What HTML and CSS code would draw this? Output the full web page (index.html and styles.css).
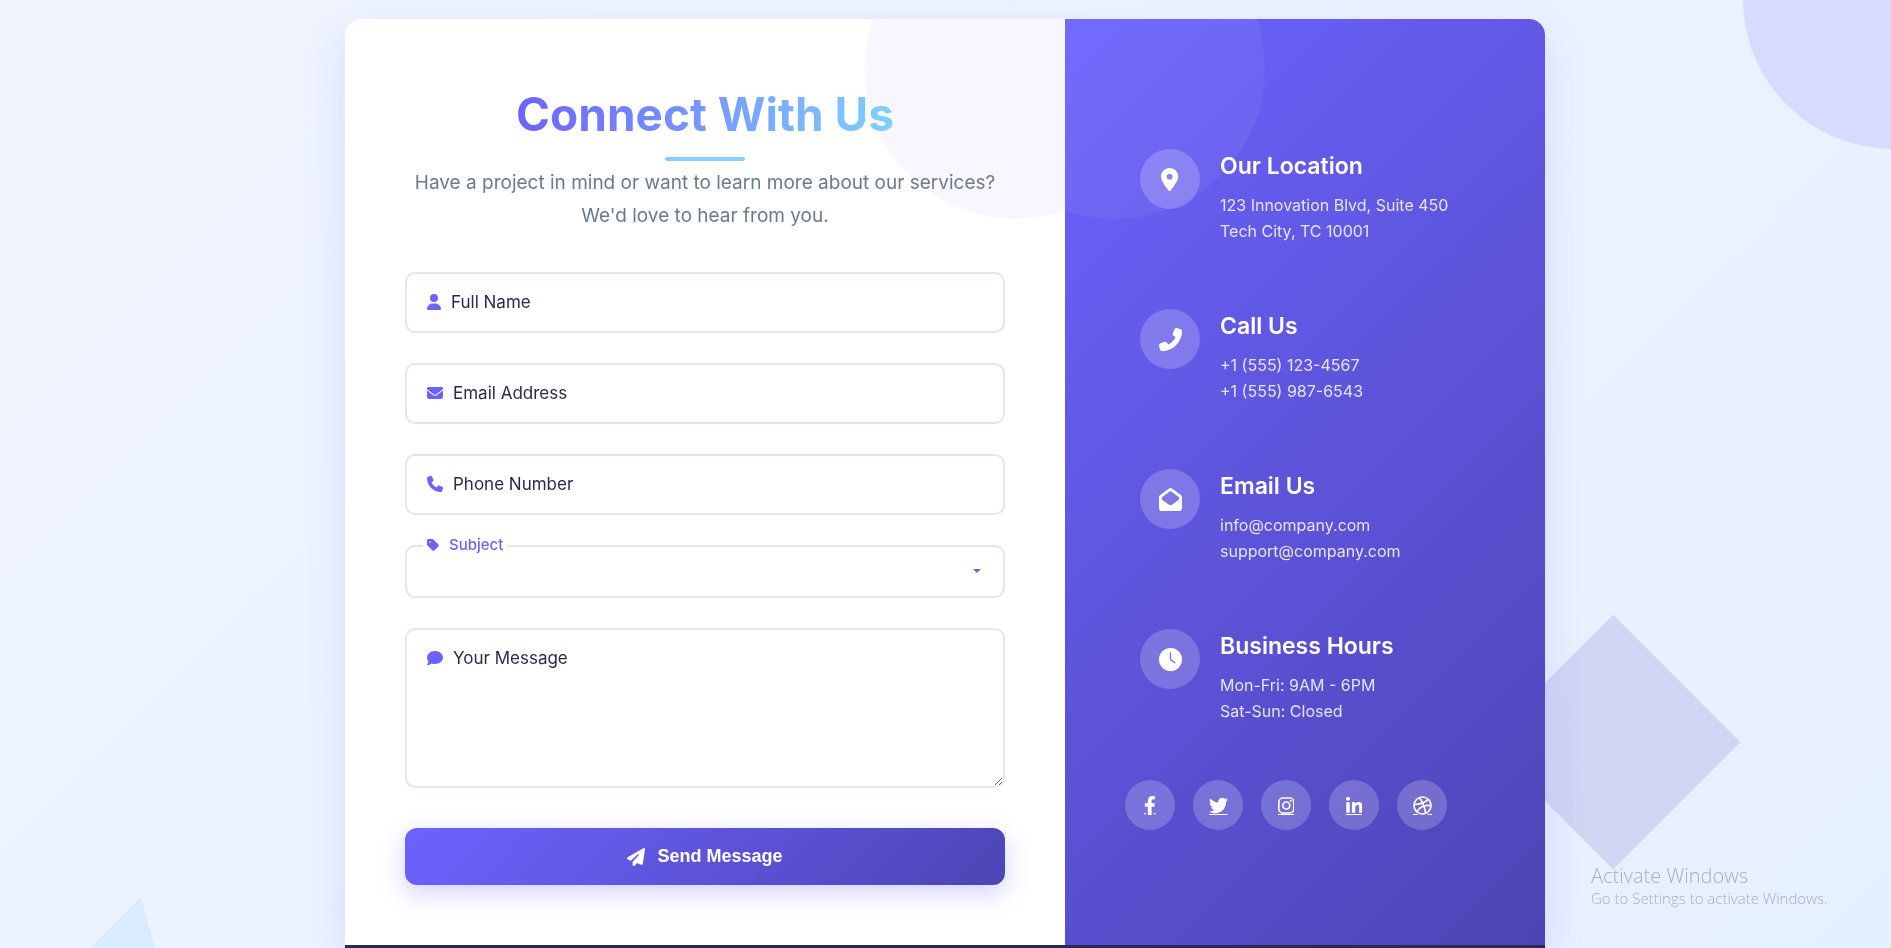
FILE: index.html
```html
<!DOCTYPE html>
<html lang="en">
<head>
<meta charset="utf-8">
<meta name="viewport" content="width=device-width, initial-scale=1">
<title>Connect With Us</title>
<link rel="stylesheet" href="styles.css">
</head>
<body>
<div class="shapes" aria-hidden="true">
  <span class="shape shape-circle"></span>
  <span class="shape shape-square"></span>
  <span class="shape shape-triangle"></span>
</div>

<main class="card">
  <section class="form-panel">
    <header class="intro">
      <h1 class="title">Connect With Us</h1>
      <p class="lead">Have a project in mind or want to learn more about our services? We'd love to hear from you.</p>
    </header>
    <form class="form">
      <div class="field">
        <input class="control" type="text" id="name">
        <label class="label" for="name"><svg class="icon icon-narrow" viewBox="0 0 448 512"><path d="M224 256A128 128 0 1 0 224 0a128 128 0 1 0 0 256zm-45.7 48C79.8 304 0 383.8 0 482.3C0 498.7 13.3 512 29.7 512H418.3c16.4 0 29.7-13.3 29.7-29.7C448 383.8 368.2 304 269.7 304H178.3z"/></svg>Full Name</label>
      </div>
      <div class="field">
        <input class="control" type="email" id="email">
        <label class="label" for="email"><svg class="icon" viewBox="0 0 512 512"><path d="M48 64C21.5 64 0 85.5 0 112c0 15.1 7.1 29.3 19.2 38.4L236.8 313.6c11.4 8.5 27 8.5 38.4 0L492.8 150.4c12.1-9.1 19.2-23.3 19.2-38.4c0-26.5-21.5-48-48-48H48zM0 176V384c0 35.3 28.7 64 64 64H448c35.3 0 64-28.7 64-64V176L294.4 339.2c-22.8 17.1-54 17.1-76.8 0L0 176z"/></svg>Email Address</label>
      </div>
      <div class="field">
        <input class="control" type="tel" id="phone">
        <label class="label" for="phone"><svg class="icon" viewBox="0 0 512 512"><path d="M164.9 24.6c-7.7-18.6-28-28.5-47.4-23.2l-88 24C12.1 30.2 0 46 0 64C0 311.4 200.6 512 448 512c18 0 33.8-12.1 38.6-29.5l24-88c5.3-19.4-4.6-39.7-23.2-47.4l-96-40c-16.3-6.8-35.2-2.1-46.3 11.6L304.7 368C234.3 334.7 177.3 277.7 144 207.3L193.3 167c13.7-11.2 18.4-30 11.6-46.3l-40-96z"/></svg>Phone Number</label>
      </div>
      <div class="field">
        <select class="control select" id="subject"><option value=""></option></select>
        <label class="label label-raised" for="subject"><svg class="icon icon-tag" viewBox="0 0 448 512"><path d="M0 80V229.5c0 17 6.7 33.3 18.7 45.3l176 176c25 25 65.5 25 90.5 0L418.7 317.3c25-25 25-65.5 0-90.5l-176-176c-12-12-28.3-18.7-45.3-18.7H48C21.5 32 0 53.5 0 80zm112 32a32 32 0 1 1 0 64 32 32 0 1 1 0-64z"/></svg>Subject</label>
        <svg class="caret" viewBox="0 0 8 4"><path d="M0 0h8L4 4z"/></svg>
      </div>
      <div class="field">
        <textarea class="control message" id="message"></textarea>
        <label class="label" for="message"><svg class="icon" viewBox="0 0 512 512"><path d="M512 240c0 114.9-114.6 208-256 208c-37.1 0-72.3-6.4-104.1-17.9c-11.9 8.7-31.3 20.6-54.3 30.6C73.6 471.1 44.7 480 16 480c-6.5 0-12.3-3.9-14.8-9.9c-2.5-6-1.1-12.8 3.4-17.4l.3-.3c.3-.3 .7-.7 1.3-1.4c1.1-1.2 2.8-3.1 4.9-5.7c4.1-5 9.6-12.4 15.2-21.6c10-16.6 19.5-38.4 21.4-62.9C17.7 326.8 0 285.1 0 240C0 125.1 114.6 32 256 32s256 93.1 256 208z"/></svg>Your Message</label>
      </div>
      <button class="submit" type="submit"><svg class="submit-icon" viewBox="0 0 512 512"><path d="M498.1 5.6c10.1 7 15.4 19.1 13.5 31.2l-64 416c-1.5 9.7-7.4 18.2-16 23s-18.9 5.4-28 1.6L284 427.7l-68.5 74.1c-8.9 9.7-22.9 12.9-35.2 8.1S160 493.2 160 480V396.4c0-4 1.5-7.8 4.2-10.7L331.8 202.8c5.8-6.3 5.6-16-.4-22s-15.7-6.4-22-.7L106 360.8 17.7 316.6C7.1 311.3 .3 300.7 0 288.9s5.9-22.8 16.1-28.7l448-256c10.7-6.1 23.9-5.5 34 1.4z"/></svg>Send Message</button>
    </form>
  </section>

  <section class="info-panel">
    <ul class="info-list">
      <li class="info">
        <span class="badge"><svg class="badge-icon" viewBox="0 0 384 512"><path d="M215.7 499.2C267 435 384 279.4 384 192C384 86 298 0 192 0S0 86 0 192c0 87.4 117 243 168.3 307.2c12.3 15.3 35.1 15.3 47.4 0zM192 128a64 64 0 1 1 0 128 64 64 0 1 1 0-128z"/></svg></span>
        <div><h2 class="info-title">Our Location</h2><p class="info-text">123 Innovation Blvd, Suite 450<br>Tech City, TC 10001</p></div>
      </li>
      <li class="info">
        <span class="badge"><svg class="badge-icon" viewBox="0 0 512 512"><path transform="matrix(-1 0 0 1 512 0)" d="M164.9 24.6c-7.7-18.6-28-28.5-47.4-23.2l-88 24C12.1 30.2 0 46 0 64C0 311.4 200.6 512 448 512c18 0 33.8-12.1 38.6-29.5l24-88c5.3-19.4-4.6-39.7-23.2-47.4l-96-40c-16.3-6.8-35.2-2.1-46.3 11.6L304.7 368C234.3 334.7 177.3 277.7 144 207.3L193.3 167c13.7-11.2 18.4-30 11.6-46.3l-40-96z"/></svg></span>
        <div><h2 class="info-title">Call Us</h2><p class="info-text">+1 (555) 123-4567<br>+1 (555) 987-6543</p></div>
      </li>
      <li class="info">
        <span class="badge"><svg class="badge-icon" viewBox="0 0 512 512"><path d="M64 208.1L256 65.9 448 208.1v47.4L289.5 373c-9.7 7.2-21.4 11-33.5 11s-23.8-3.9-33.5-11L64 255.5V208.1zM256 0c-12.1 0-23.8 3.9-33.5 11L25.9 156.7C9.6 168.8 0 187.8 0 208.1V448c0 35.3 28.7 64 64 64H448c35.3 0 64-28.7 64-64V208.1c0-20.3-9.6-39.4-25.9-51.4L289.5 11C279.8 3.9 268.1 0 256 0z"/></svg></span>
        <div><h2 class="info-title">Email Us</h2><p class="info-text">info@company.com<br>support@company.com</p></div>
      </li>
      <li class="info">
        <span class="badge"><svg class="badge-icon" viewBox="0 0 512 512"><path fill-rule="evenodd" d="M256 0a256 256 0 1 1 0 512A256 256 0 1 1 256 0zM240 112V260c0 6 3 11 8 14l98 68c8 5 17 3 22-4s3-17-4-22L272 252V112c0-9-7-16-16-16s-16 7-16 16z"/></svg></span>
        <div><h2 class="info-title">Business Hours</h2><p class="info-text">Mon-Fri: 9AM - 6PM<br>Sat-Sun: Closed</p></div>
      </li>
    </ul>
    <nav class="social" aria-label="Social media">
      <a class="social-link" href="#" aria-label="Facebook"><svg class="social-icon" viewBox="0 0 320 512"><path d="M279.14 288l14.22-92.66h-88.91v-60.13c0-25.35 12.42-50.06 52.24-50.06h40.42V6.26S260.43 0 225.36 0c-73.22 0-121.08 44.38-121.08 124.72v70.62H22.89V288h81.39v224h100.17V288z"/><path d="M0 468h60v27H0zM250 468h70v27h-70z"/></svg></a>
      <a class="social-link" href="#" aria-label="Twitter"><svg class="social-icon" viewBox="0 0 512 512"><path d="M459.37 151.716c.325 4.548.325 9.097.325 13.645 0 138.72-105.583 298.558-298.558 298.558-59.452 0-114.68-17.219-161.137-47.106 8.447.974 16.568 1.299 25.34 1.299 49.055 0 94.213-16.568 130.274-44.832-46.132-.975-84.792-31.188-98.112-72.772 6.498.974 12.995 1.624 19.818 1.624 9.421 0 18.843-1.3 27.614-3.573-48.081-9.747-84.143-51.98-84.143-102.985v-1.299c13.969 7.797 30.214 12.67 47.431 13.319-28.264-18.843-46.781-51.005-46.781-87.391 0-19.492 5.197-37.36 14.294-52.954 51.655 63.675 129.3 105.258 216.365 109.807-1.624-7.797-2.599-15.918-2.599-24.04 0-57.828 46.782-104.934 104.934-104.934 30.213 0 57.502 12.67 76.67 33.137 23.715-4.548 46.456-13.32 66.599-25.34-7.798 24.366-24.366 44.833-46.132 57.827 21.117-2.273 41.584-8.122 60.426-16.243-14.292 20.791-32.161 39.308-52.628 54.253z"/><path d="M0 485h512v27H0z"/></svg></a>
      <a class="social-link" href="#" aria-label="Instagram"><svg class="social-icon" viewBox="0 -32 448 512"><rect x="22" y="22" width="404" height="404" rx="112" fill="none" stroke="#fff" stroke-width="44"/><circle cx="224" cy="224" r="94" fill="none" stroke="#fff" stroke-width="46"/><circle cx="343" cy="105" r="27"/><path d="M0 453h448v27H0z"/></svg></a>
      <a class="social-link" href="#" aria-label="LinkedIn"><svg class="social-icon" viewBox="0 -32 448 512"><path d="M100.28 416H7.4V138.9h92.88zM53.79 98.1C24.09 98.1 0 73.5 0 43.8a53.79 53.79 0 0 1 107.58 0c0 29.7-24.1 54.3-53.79 54.3zM447.9 416h-92.68V292.4c0-34.7-.7-79.2-48.29-79.2-48.29 0-55.69 37.7-55.69 76.7V416h-92.78V138.9h89.08v40.8h1.3c12.4-23.5 42.69-48.3 87.88-48.3 94 0 111.28 61.9 111.28 142.3V416z"/><path d="M0 453h448v27H0z"/></svg></a>
      <a class="social-link" href="#" aria-label="Dribbble"><svg class="social-icon" viewBox="0 0 512 512"><g fill="none" stroke="#fff" stroke-width="44"><circle cx="256" cy="256" r="230"/><path d="M28 228C160 230 300 205 410 92M104 424C180 300 300 230 484 262M170 42C260 150 310 280 340 470"/></g><path d="M0 485h120v27H0zM392 485h120v27H392z"/></svg></a>
    </nav>
  </section>
</main>
<footer class="footer"></footer>

<aside class="watermark">
  <p class="watermark-title">Activate Windows</p>
  <p class="watermark-text">Go to Settings to activate Windows.</p>
</aside>
</body>
</html>
```
FILE: styles.css
```css
:root {
  --primary: #6c63ff;
  --primary-dark: #4d44b5;
  --accent: #87cefa;
  --dark: #2a2950;
  --muted: #6b7a90;
  --line: #e2e6ee;
}

* { box-sizing: border-box; }

h1, h2, p, ul { margin: 0; padding: 0; }

body {
  margin: 0;
  min-height: 100vh;
  padding: 19px 21px 0 20px;
  display: flex;
  flex-direction: column;
  align-items: center;
  overflow: hidden;
  font-family: Inter, "Open Sans", sans-serif;
  color: var(--dark);
  background: linear-gradient(135deg, #f0f4ff 0%, #e5f0ff 100%);
}

svg { fill: currentColor; }

/* Decorative background */
.shapes { position: fixed; inset: 0; z-index: -1; overflow: hidden; }
.shape { position: absolute; }
.shape-circle {
  top: -151px;
  right: -152px;
  width: 300px;
  height: 300px;
  border-radius: 50%;
  background: rgba(108, 99, 255, 0.15);
}
.shape-square {
  right: 188px;
  bottom: 116px;
  width: 180px;
  height: 180px;
  transform: rotate(45deg);
  background: rgba(77, 68, 181, 0.15);
}
.shape-triangle {
  left: 0;
  bottom: -149px;
  width: 200px;
  height: 200px;
  clip-path: polygon(141px 0, 0 141px, 193px 193px);
  background: rgba(135, 206, 250, 0.18);
}

/* Card */
.card {
  width: 100%;
  max-width: 1200px;
  display: grid;
  grid-template-columns: 3fr 2fr;
  overflow: hidden;
  border-radius: 16px 16px 0 0;
  background: #fff;
  box-shadow: 0 16px 40px rgba(108, 99, 255, 0.16);
}

.form-panel, .info-panel { position: relative; overflow: hidden; padding: 60px; }
.form-panel::before, .info-panel::before {
  content: "";
  position: absolute;
  top: -100px;
  width: 300px;
  height: 300px;
  border-radius: 50%;
}
.form-panel::before { right: -100px; background: rgba(108, 99, 255, 0.05); }
.info-panel::before { left: -100px; background: rgba(255, 255, 255, 0.05); }

/* Intro */
.intro { position: relative; margin-bottom: 40px; text-align: center; }
.title {
  width: fit-content;
  margin: 0 auto;
  font-size: 46px;
  line-height: 70px;
  font-weight: 700;
  color: transparent;
  background: linear-gradient(90deg, var(--primary), #7fd0ff);
  background-clip: text;
}
.lead { font-size: 19px; line-height: 33px; color: var(--muted); }
.lead::before {
  content: "";
  display: block;
  width: 80px;
  height: 4px;
  margin: 8px auto 5px;
  border-radius: 2px;
  background: var(--accent);
}

/* Form */
.form { position: relative; display: flex; flex-direction: column; gap: 30px; }
.field { position: relative; display: flex; }
.control {
  width: 100%;
  height: 61px;
  padding: 16px 20px;
  border: 2px solid var(--line);
  border-radius: 10px;
  outline: none;
  background: #fff;
  font: inherit;
  font-size: 17px;
  color: var(--dark);
}
.select { height: 53px; appearance: none; }
.message { height: 160px; resize: vertical; }
.label {
  position: absolute;
  top: 18px;
  left: 22px;
  display: flex;
  align-items: center;
  gap: 10px;
  font-size: 17px;
  line-height: 24px;
}
.label-raised {
  top: -12px;
  left: 18px;
  padding: 0 4px;
  font-size: 15px;
  font-weight: 500;
  color: var(--primary);
  background: #fff;
}
.icon { width: 16px; height: 16px; color: var(--primary); }
.icon-narrow { width: 14px; }
.icon-tag { width: 12px; height: 14px; }
.caret {
  position: absolute;
  top: 24px;
  right: 24px;
  width: 8px;
  height: 4px;
  color: var(--primary);
  pointer-events: none;
}
.submit {
  display: flex;
  align-items: center;
  justify-content: center;
  gap: 12px;
  height: 57px;
  margin-top: 10px;
  border: 0;
  border-radius: 12px;
  font-family: "Liberation Sans", Arial, sans-serif;
  font-size: 18px;
  font-weight: 700;
  color: #fff;
  background: linear-gradient(135deg, var(--primary), var(--primary-dark));
  box-shadow: 0 8px 24px rgba(108, 99, 255, 0.3);
}
.submit-icon { width: 18px; height: 18px; }

/* Contact details */
.info-panel {
  display: flex;
  flex-direction: column;
  justify-content: center;
  gap: 41px;
  color: #fff;
  background: linear-gradient(135deg, var(--primary), var(--primary-dark));
}
.info-list { position: relative; display: grid; gap: 35px; list-style: none; }
.info { display: flex; gap: 20px; padding: 15px; }
.badge {
  flex: none;
  display: grid;
  place-items: center;
  width: 60px;
  height: 60px;
  border-radius: 50%;
  background: rgba(255, 255, 255, 0.2);
}
.badge-icon { height: 23px; }
.info-title { margin-bottom: 9px; font-size: 23px; line-height: 34px; font-weight: 600; }
.info-text { font-size: 16px; line-height: 26px; color: rgba(255, 255, 255, 0.84); }

.social { position: relative; display: flex; gap: 18px; }
.social-link {
  display: grid;
  place-items: center;
  width: 50px;
  height: 50px;
  border-radius: 50%;
  color: #fff;
  background: rgba(255, 255, 255, 0.2);
}
.social-icon { height: 19px; }

.footer { flex: 1; width: 100%; max-width: 1200px; min-height: 3px; background: var(--dark); }

/* System watermark */
.watermark {
  position: fixed;
  right: 64px;
  bottom: 40px;
  width: 236px;
  font-family: "Open Sans", "Noto Sans", sans-serif;
  font-weight: 300;
  color: #a9afba;
  white-space: nowrap;
}
.watermark-title { font-size: 20px; line-height: 24px; }
.watermark-text { font-size: 15px; line-height: 20px; }
```
